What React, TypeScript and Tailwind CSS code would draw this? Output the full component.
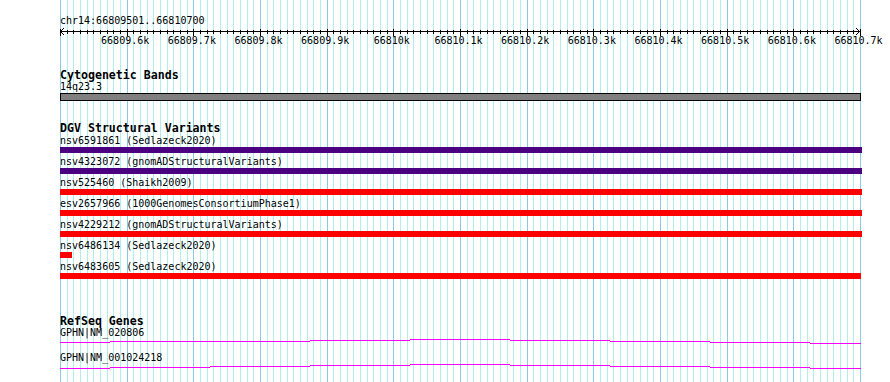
import React from "react";

// 1200 bp laid out over 800 px, one grid line every 10 bp
const TICKS = Array.from({ length: 121 }, (_, i) => i);
const tickX = (i: number) => Math.round((i * 20) / 3);

const scaleLabels = [
  "66809.6k", "66809.7k", "66809.8k", "66809.9k", "66810k", "66810.1k",
  "66810.2k", "66810.3k", "66810.4k", "66810.5k", "66810.6k", "66810.7k",
];

interface Variant {
  name: string;
  color: string;
  width: string;
}

const variants: Variant[] = [
  { name: "nsv6591861 (Sedlazeck2020)", color: "bg-[#4b0082]", width: "w-[802px]" },
  { name: "nsv4323072 (gnomADStructuralVariants)", color: "bg-[#4b0082]", width: "w-[802px]" },
  { name: "nsv525460 (Shaikh2009)", color: "bg-[#ff0000]", width: "w-[802px]" },
  { name: "esv2657966 (1000GenomesConsortiumPhase1)", color: "bg-[#ff0000]", width: "w-[802px]" },
  { name: "nsv4229212 (gnomADStructuralVariants)", color: "bg-[#ff0000]", width: "w-[802px]" },
  { name: "nsv6486134 (Sedlazeck2020)", color: "bg-[#ff0000]", width: "w-[12px]" },
  { name: "nsv6483605 (Sedlazeck2020)", color: "bg-[#ff0000]", width: "w-[801px]" },
];

// block edges (relative to track start) and line offset per block
const blockEdges = [0, 50, 150, 250, 350, 450, 550, 650, 750, 801];

const genes = [
  { name: "GPHN|NM_020806", offsets: [3, 2, 2, 1, 0, 1, 2, 3, 4] },
  { name: "GPHN|NM_001024218", offsets: [4, 3, 2, 1, 0, 1, 2, 3, 4] },
];

const Grid = () => (
  <svg
    width={890}
    height={382}
    className="absolute inset-0 pointer-events-none"
    shapeRendering="crispEdges"
  >
    {TICKS.map((i) => {
      const x = 60 + tickX(i) + 0.5;
      return (
        <line
          key={i}
          x1={x}
          x2={x}
          y1={0}
          y2={382}
          stroke={i % 10 === 0 ? "#87cbe8" : "#aeeeee"}
          strokeWidth={1}
        />
      );
    })}
  </svg>
);

const Ruler = () => (
  <svg width={830} height={20} className="block overflow-visible" shapeRendering="crispEdges">
    <line x1={0} y1={4.5} x2={800} y2={4.5} stroke="#000" />
    {TICKS.map((i) => {
      const x = tickX(i) + 0.5;
      const major = i % 10 === 0;
      return <line key={i} x1={x} x2={x} y1={major ? 2 : 3} y2={major ? 9 : 7} stroke="#000" />;
    })}
    <polyline points="4,1 0.5,4.5 4,8" fill="none" stroke="#000" shapeRendering="auto" />
    <polyline points="796,1 799.5,4.5 796,8" fill="none" stroke="#000" shapeRendering="auto" />
    {scaleLabels.map((label, k) => (
      <text
        key={label}
        x={((k + 1) * 200) / 3 - 1.5}
        y={17}
        textAnchor="middle"
        fontSize={10}
        fontFamily="DejaVu Sans Mono, monospace"
        fill="#000"
      >
        {label}
      </text>
    ))}
  </svg>
);

const GeneLine = ({ offsets }: { offsets: number[] }) => (
  <svg width={802} height={13} className="block" shapeRendering="crispEdges">
    {offsets.map((dy, i) => (
      <line
        key={i}
        x1={blockEdges[i]}
        x2={blockEdges[i + 1]}
        y1={dy + 0.5}
        y2={dy + 0.5}
        stroke="#ff00ff"
        strokeWidth={1}
      />
    ))}
  </svg>
);

const App: React.FC = () => {
  return (
    <div className="relative w-[890px] h-[382px] overflow-hidden bg-white text-black font-['DejaVu_Sans_Mono',monospace]">
      <Grid />

      <div className="relative pl-[60px] pt-[15px]">
        {/* location + scale bar */}
        <div className="h-[12px] text-[10px] leading-[12px] whitespace-nowrap">chr14:66809501..66810700</div>
        <Ruler />

        {/* Cytogenetic Bands */}
        <div className="mt-[22px] h-[12px] text-[11.6px] font-bold leading-[12px] whitespace-nowrap">
          Cytogenetic Bands
        </div>
        <div className="h-[11px] text-[10px] leading-[11px]">14q23.3</div>
        <div className="mt-[1px] h-[8px] w-[801px] border border-black bg-[#808080]" />

        {/* DGV Structural Variants */}
        <div className="mt-[21px] h-[12px] text-[11.6px] font-bold leading-[12px] whitespace-nowrap">
          DGV Structural Variants
        </div>
        {variants.map((v) => (
          <div key={v.name} className="mb-[2px]">
            <div className="h-[13px] text-[10px] leading-[13px] whitespace-nowrap">{v.name}</div>
            <div className={`h-[6px] ${v.width} ${v.color}`} />
          </div>
        ))}

        {/* RefSeq Genes */}
        <div className="mt-[36px] h-[12px] text-[11.6px] font-bold leading-[12px] whitespace-nowrap">
          RefSeq Genes
        </div>
        {genes.map((g) => (
          <div key={g.name}>
            <div className="h-[12px] text-[10px] leading-[12px] whitespace-nowrap">{g.name}</div>
            <GeneLine offsets={g.offsets} />
          </div>
        ))}
      </div>
    </div>
  );
};

export default App;
